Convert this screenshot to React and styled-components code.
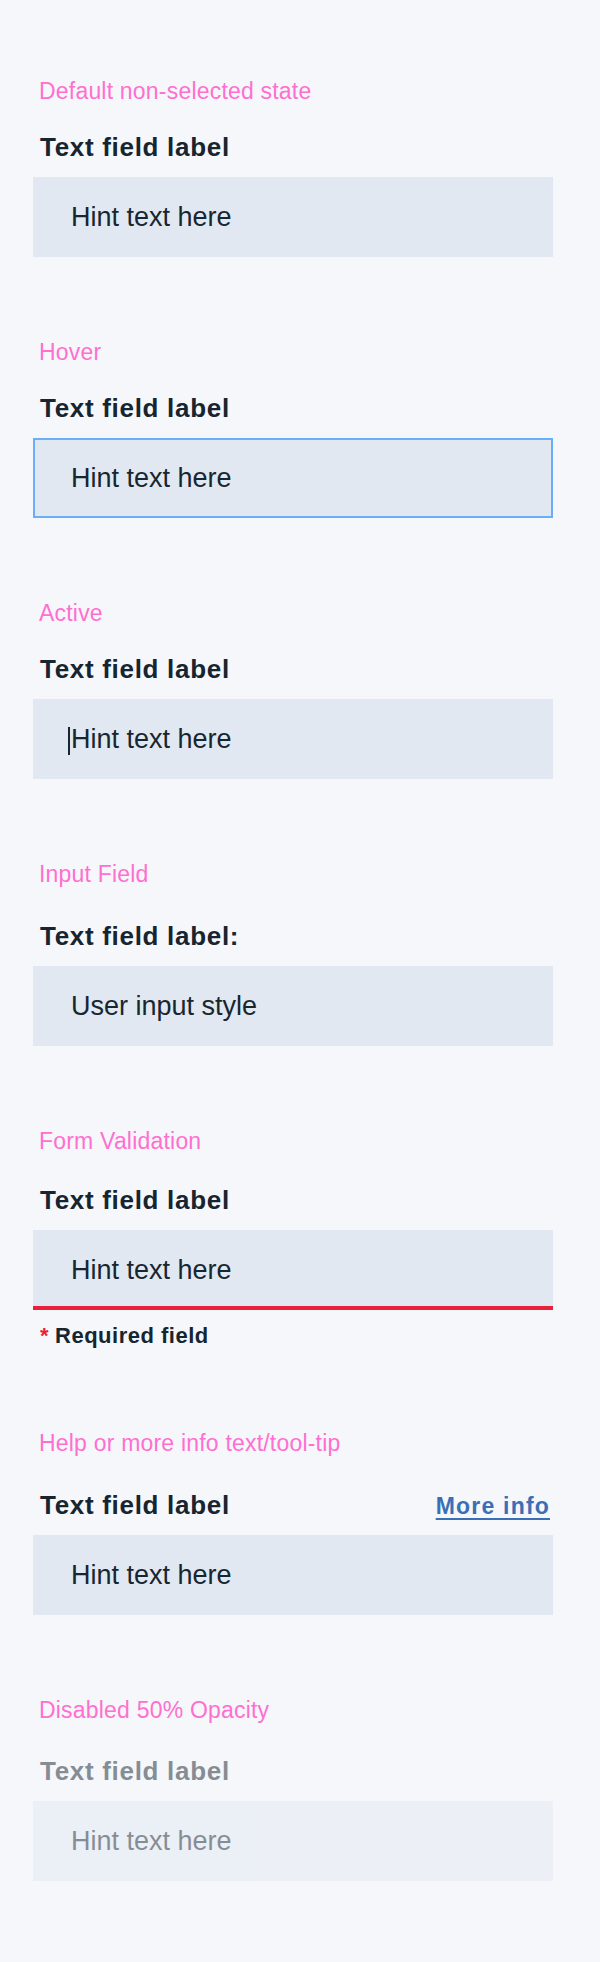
import React from "react";
import styled, { createGlobalStyle } from "styled-components";

const GlobalStyle = createGlobalStyle`
  body {
    margin: 0;
    background: #f6f7fb;
    font-family: "Liberation Sans", Arial, sans-serif;
  }
`;

const Page = styled.div`
  display: flex;
  flex-direction: column;
  gap: 82px;
  width: 600px;
  box-sizing: border-box;
  padding: 78px 47px 80px 33px;
  background: #f6f7fb;
`;

const Section = styled.section`
  display: flex;
  flex-direction: column;
`;

const Caption = styled.div`
  height: 26px;
  line-height: 26px;
  padding-left: 6px;
  margin-bottom: ${({ $gap }) => $gap}px;
  font-size: 23px;
  letter-spacing: 0.2px;
  color: #ff6fd0;
`;

const Body = styled.div`
  display: flex;
  flex-direction: column;
  opacity: ${({ $disabled }) => ($disabled ? 0.5 : 1)};
`;

const LabelRow = styled.div`
  display: flex;
  justify-content: space-between;
  align-items: baseline;
  height: 30px;
  padding: 0 3px 0 7px;
  margin-bottom: 15px;
`;

const Label = styled.label`
  font-size: 26px;
  line-height: 30px;
  font-weight: 700;
  letter-spacing: 0.7px;
  color: #16252f;
`;

const MoreInfo = styled.a`
  font-size: 23px;
  font-weight: 700;
  letter-spacing: 1.2px;
  color: #3a6fb5;
  text-decoration: underline;
  text-decoration-thickness: 2px;
  text-underline-offset: 4px;
  cursor: pointer;
`;

const Field = styled.div`
  display: flex;
  align-items: center;
  height: 80px;
  box-sizing: border-box;
  padding-left: 38px;
  background: #e1e8f2;
  box-shadow: ${({ $hover }) => ($hover ? "inset 0 0 0 2px #6aaefa" : "none")};
  border-bottom: ${({ $error }) => ($error ? "4px solid #e8203a" : "none")};
  padding-top: ${({ $error }) => ($error ? "4px" : "0")};
`;

const Hint = styled.span`
  display: flex;
  align-items: center;
  font-size: 27px;
  line-height: 32px;
  color: #17262f;
`;

const Caret = styled.span`
  display: inline-block;
  width: 2px;
  height: 28px;
  margin: 3px 1px 0 -3px;
  background: #17262f;
`;

const Note = styled.div`
  margin-top: 14px;
  height: 24px;
  line-height: 24px;
  padding-left: 7px;
  font-size: 22px;
  font-weight: 700;
  letter-spacing: 0.5px;
  color: #16252f;
`;

const Star = styled.span`
  color: #e8203a;
  margin-right: 6px;
`;

const FieldBlock = ({ caption, gap, label, text, hover, active, error, more, disabled, children }) => (
  <Section>
    <Caption $gap={gap}>{caption}</Caption>
    <Body $disabled={disabled}>
      <LabelRow>
        <Label>{label}</Label>
        {more && <MoreInfo>More info</MoreInfo>}
      </LabelRow>
      <Field $hover={hover} $error={error}>
        <Hint>
          {active && <Caret />}
          {text}
        </Hint>
      </Field>
    </Body>
    {children}
  </Section>
);

export default function App() {
  return (
    <>
      <GlobalStyle />
      <Page>
        <FieldBlock caption="Default non-selected state" gap={28} label="Text field label" text="Hint text here" />
        <FieldBlock caption="Hover" gap={28} label="Text field label" text="Hint text here" hover />
        <FieldBlock caption="Active" gap={28} label="Text field label" text="Hint text here" active />
        <FieldBlock caption="Input Field" gap={33.5} label="Text field label:" text="User input style" />
        <FieldBlock caption="Form Validation" gap={31.5} label="Text field label" text="Hint text here" error>
          <Note>
            <Star>*</Star>Required field
          </Note>
        </FieldBlock>
        <FieldBlock caption="Help or more info text/tool-tip" gap={33.5} label="Text field label" text="Hint text here" more />
        <FieldBlock caption="Disabled 50% Opacity" gap={33.5} label="Text field label" text="Hint text here" disabled />
      </Page>
    </>
  );
}
